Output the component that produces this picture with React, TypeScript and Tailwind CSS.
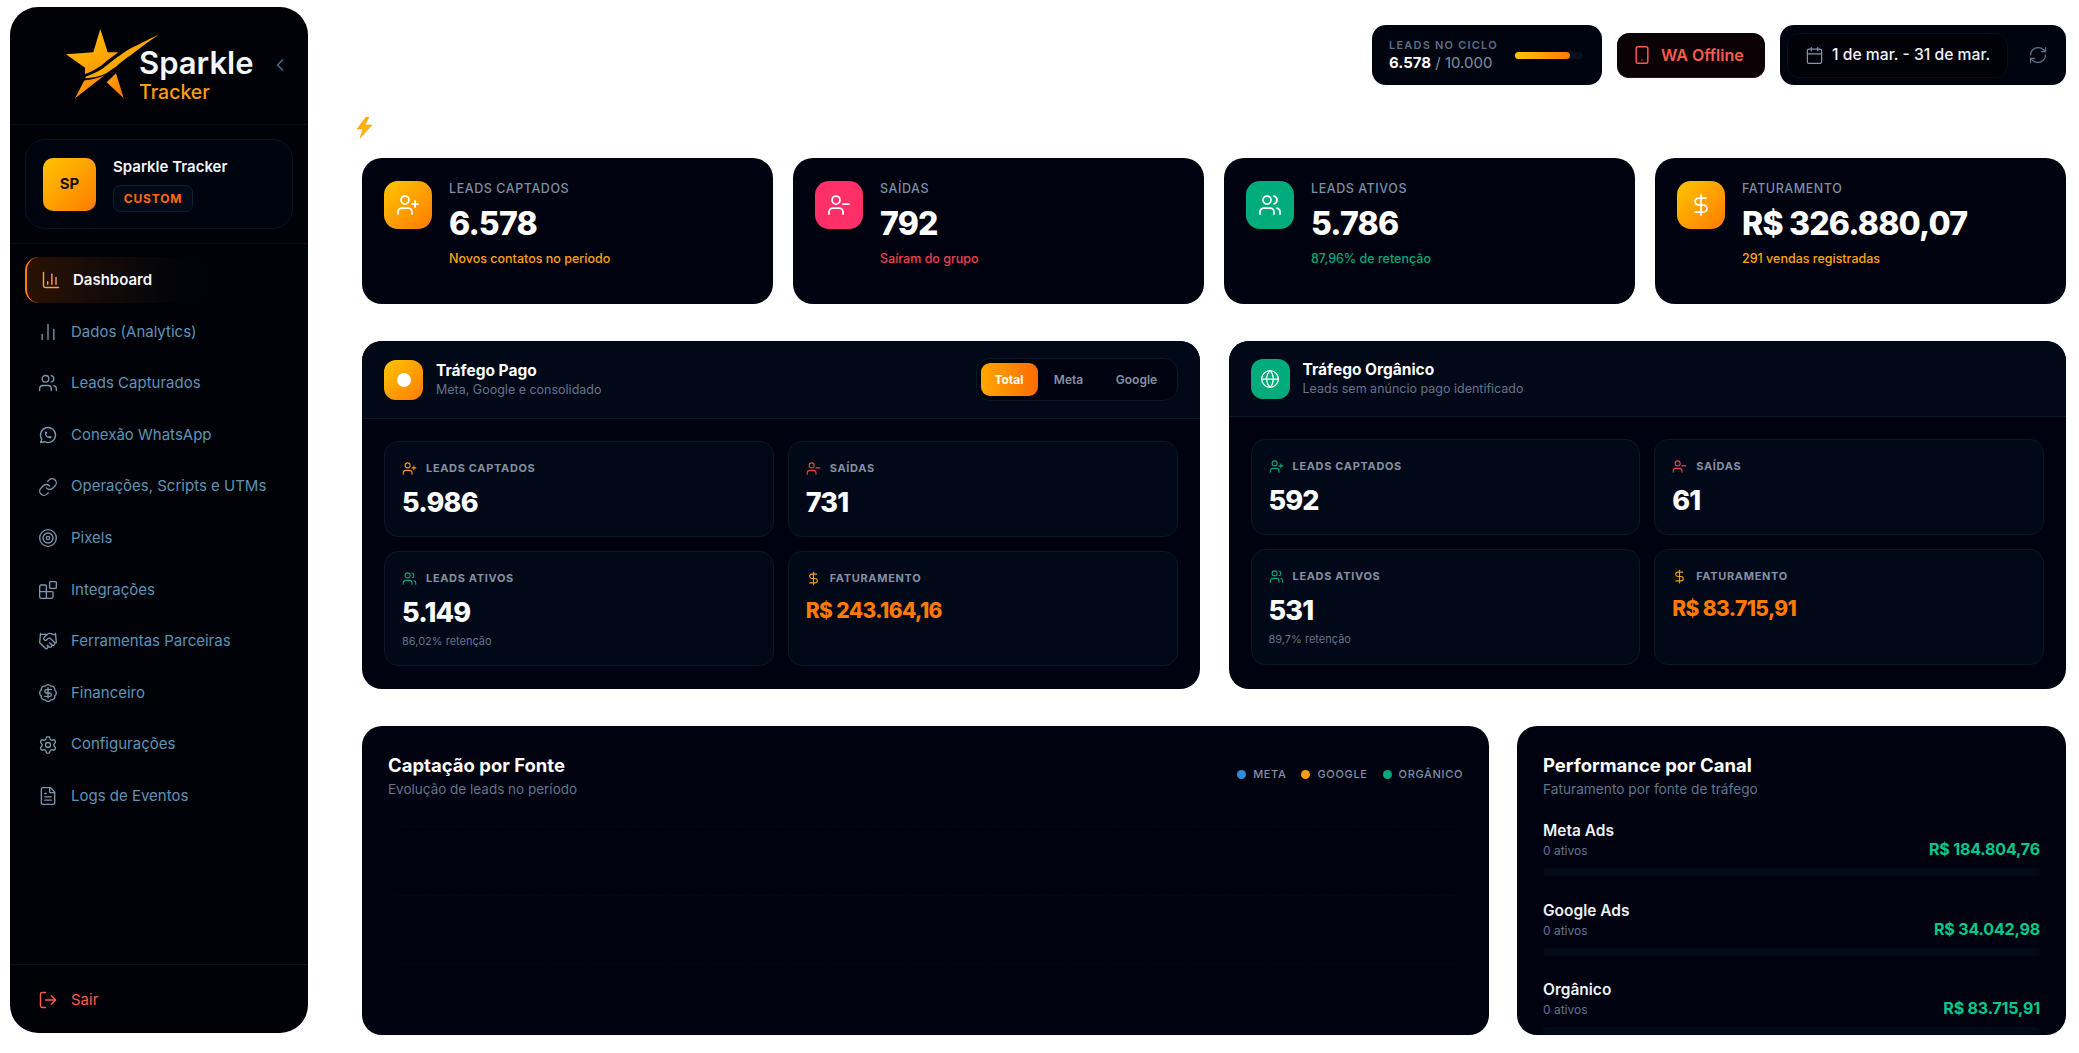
import React from 'react';
import {
  ChartColumn, ChartNoAxesColumn, Users, Link, Target, Blocks, Handshake, BadgeDollarSign, Settings, FileText,
  LogOut, Smartphone, Calendar, RefreshCw, UserPlus, UserMinus, DollarSign, Globe, ChevronLeft,
} from 'lucide-react';
import { TbBrandWhatsapp } from 'react-icons/tb';

const navItems = [
  { label: 'Dados (Analytics)', icon: ChartNoAxesColumn },
  { label: 'Leads Capturados', icon: Users },
  { label: 'Conexão WhatsApp', icon: TbBrandWhatsapp },
  { label: 'Operações, Scripts e UTMs', icon: Link },
  { label: 'Pixels', icon: Target },
  { label: 'Integrações', icon: Blocks },
  { label: 'Ferramentas Parceiras', icon: Handshake },
  { label: 'Financeiro', icon: BadgeDollarSign },
  { label: 'Configurações', icon: Settings },
  { label: 'Logs de Eventos', icon: FileText },
];

const kpis = [
  { label: 'LEADS CAPTADOS', value: '6.578', note: 'Novos contatos no período', noteClass: 'text-[#ffa310]', iconClass: 'bg-gradient-to-br from-[#ffc400] to-[#ff7a00]', icon: UserPlus },
  { label: 'SAÍDAS', value: '792', note: 'Saíram do grupo', noteClass: 'text-[#f43f4e]', iconClass: 'bg-[#ff2f68]', icon: UserMinus },
  { label: 'LEADS ATIVOS', value: '5.786', note: '87,96% de retenção', noteClass: 'text-[#00a878]', iconClass: 'bg-[#00ac7c]', icon: Users },
  { label: 'FATURAMENTO', value: 'R$ 326.880,07', note: '291 vendas registradas', noteClass: 'text-[#ffa310]', iconClass: 'bg-gradient-to-br from-[#ffc400] to-[#ff7a00]', icon: DollarSign },
];

const channels = [
  { name: 'Meta Ads', value: 'R$ 184.804,76' },
  { name: 'Google Ads', value: 'R$ 34.042,98' },
  { name: 'Orgânico', value: 'R$ 83.715,91' },
];

const Logo = () => (
  <svg width="100" height="76" viewBox="64 28 100 76" className="shrink-0">
    <defs>
      <linearGradient id="star" x1="0" y1="0" x2="0.6" y2="1">
        <stop offset="0" stopColor="#ffc800" />
        <stop offset="1" stopColor="#ff9a00" />
      </linearGradient>
      <linearGradient id="leg" x1="0" y1="0" x2="1" y2="1">
        <stop offset="0" stopColor="#ffab00" />
        <stop offset="1" stopColor="#ff7000" />
      </linearGradient>
    </defs>
    <path d="M99.3 29 L106.7 52.3 L117.3 52.3 L107 60 Q96 70 84 74 L84 67.7 L65 54.3 L92.3 52.3 Z" fill="url(#star)" />
    <path d="M158.3 34.3 C146 40 135 46 126.7 50 C120 54 110 62 101.7 68.5 C96 72 90 75 85 76.5 L84 78.3 C92 78 98 76.5 103.3 74.3 C108 72 111 69 115 66.7 C120 62 125 58 130 55 C140 47 150 40 158.3 34.3 Z" fill="#ffa800" />
    <path d="M74 98.3 L83.3 80.5 C90 80 97 78 103.3 75.5 Z" fill="url(#leg)" />
    <path d="M115 73.3 L122.7 98.3 L105.7 82.3 Z" fill="url(#leg)" />
  </svg>
);

const Sidebar = () => (
  <aside className="ml-[10px] mt-[7px] flex h-[1026px] w-[298px] shrink-0 flex-col overflow-hidden rounded-[28px] bg-[#000208]">
    <div className="flex h-[118px] items-start border-b border-[#07101a] pl-[55px] pr-[18px] pt-[21px]">
      <Logo />
      <div className="ml-[-26px] mt-[18px] flex flex-col">
        <span className="text-[31px] font-semibold leading-[34px] text-[#f4f7fa]">Sparkle</span>
        <span className="text-[19.5px] font-medium leading-[25px] text-[#ff9d0a]">Tracker</span>
      </div>
      <ChevronLeft size={20} className="ml-auto mt-[27px] text-[#4b6a85]" />
    </div>

    <div className="border-b border-[#07101a] px-[15px] py-[14px]">
      <div className="flex h-[90px] items-center gap-[17px] rounded-[20px] border border-[#0a1622] bg-[#00040f] pl-[17px]">
        <div className="flex h-[53px] w-[53px] items-center justify-center rounded-[10px] bg-gradient-to-br from-[#ffc400] to-[#ff7a00] text-[15px] font-bold text-[#14100a]">SP</div>
        <div className="flex flex-col gap-[9px] pt-[2px]">
          <span className="text-[15px] font-semibold leading-[18px] text-[#f4f7fa]">Sparkle Tracker</span>
          <span className="flex h-[27px] w-[80px] items-center justify-center rounded-[7px] border border-[#0e1f2e] bg-[#010a17] text-[12px] font-bold tracking-[0.07em] text-[#ff6a0a]">CUSTOM</span>
        </div>
      </div>
    </div>

    <nav className="flex flex-1 flex-col px-[15px] pt-[13px]">
      <div className="flex h-[46px] items-center gap-[12px] rounded-[14px] border-l-2 border-[#ff7a00] bg-gradient-to-r from-[#2a1204] to-[#000208] to-70% pl-[14px] text-[15px] font-semibold text-[#f4f7fa]">
        <ChartColumn size={20} strokeWidth={1.75} className="text-[#f9a03f]" />
        Dashboard
      </div>
      <div className="mt-[3px] flex flex-col">
        {navItems.map(item => (
          <div key={item.label} className="flex h-[51.6px] items-center gap-[13px] pl-[13px] text-[15px] text-[#5f93b5]">
            <item.icon size={20} strokeWidth={1.6} className="shrink-0 text-[#7f97ab]" />
            {item.label}
          </div>
        ))}
      </div>
    </nav>

    <div className="flex h-[69px] items-center gap-[13px] border-t border-[#08141f] pl-[28px] pt-[2px] text-[15px] text-[#ff5a4f]">
      <LogOut size={20} strokeWidth={1.75} />
      Sair
    </div>
  </aside>
);

const TopBar = () => (
  <div className="flex items-center justify-end">
    <div className="flex h-[60px] w-[230px] items-center gap-[14px] rounded-[14px] bg-[#00040f] pl-[17px]">
      <div className="flex w-[112px] flex-col">
        <span className="text-[11px] font-semibold leading-[16px] tracking-[0.11em] text-[#5b6f85]">LEADS NO CICLO</span>
        <span className="text-[15px] leading-[20px] text-[#7d8fa3]"><b className="font-bold text-white">6.578</b> / 10.000</span>
      </div>
      <div className="h-[7px] w-[68px] rounded-full bg-[#051020]">
        <div className="h-full w-[81%] rounded-full bg-gradient-to-r from-[#ffc400] to-[#ff7a00]" />
      </div>
    </div>
    <div className="ml-[15px] flex h-[45px] w-[148px] items-center gap-[9px] rounded-[12px] border-b border-[#3a1512] bg-[#0a0204] pl-[15px] pt-[1px] text-[16px] font-semibold text-[#ff5a4f]">
      <Smartphone size={20} strokeWidth={1.75} />
      WA Offline
    </div>
    <div className="ml-[15px] flex h-[60px] w-[286px] items-center gap-[20px] rounded-[14px] bg-[#00040f] pl-[7px]">
      <div className="flex h-[45px] w-[221px] items-center gap-[8px] rounded-[12px] border border-[#060f1c] bg-[#000208] pl-[17px] text-[15.7px] font-medium text-[#eef2f6]">
        <Calendar size={19} strokeWidth={1.5} className="text-[#8a97a6]" />
        1 de mar. - 31 de mar.
      </div>
      <RefreshCw size={20} strokeWidth={1.5} className="text-[#5f7488]" />
    </div>
  </div>
);

const KpiCard = ({ kpi }: { kpi: (typeof kpis)[number] }) => (
  <div className="flex h-[146px] items-start gap-[17px] rounded-[20px] bg-[#00030f] pl-[22px] pt-[24px]">
    <div className={`-mt-px flex h-[48px] w-[48px] items-center justify-center rounded-[14px] ${kpi.iconClass}`}>
      <kpi.icon size={24} strokeWidth={1.75} className="text-white" />
    </div>
    <div className="flex flex-col">
      <span className="text-[12.5px] font-medium leading-[14px] tracking-[0.045em] text-[#7d8fa3]">{kpi.label}</span>
      <span className="mt-[8px] text-[32px] font-extrabold leading-[40px] tracking-[-0.025em] text-white">{kpi.value}</span>
      <span className={`mt-[7px] text-[12.5px] font-medium leading-[16px] ${kpi.noteClass}`}>{kpi.note}</span>
    </div>
  </div>
);

type Metric = { label: string; value: string; money?: boolean; note?: string; icon: React.ElementType; iconClass: string };

const MetricCard = ({ metric }: { metric: Metric }) => (
  <div className="rounded-[14px] border border-[#0a1828] bg-[#010818] pl-[17px] pt-[16px]">
    <div className="flex h-[20px] items-center gap-[9px]">
      <metric.icon size={15} strokeWidth={1.75} className={metric.iconClass} />
      <span className="text-[11px] font-bold tracking-[0.06em] text-[#8291a3]">{metric.label}</span>
    </div>
    {metric.money ? (
      <div className="mt-[7px] text-[21px] font-extrabold leading-[32px] tracking-[-0.03em] text-[#ff7a00]">{metric.value}</div>
    ) : (
      <div className="mt-[7px] text-[27px] font-extrabold leading-[36px] tracking-[-0.03em] text-white">{metric.value}</div>
    )}
    {metric.note && <div className="mt-[2px] text-[11px] leading-[16px] text-[#64748b]">{metric.note}</div>}
  </div>
);

const PanelBody = ({ items, rowClass }: { items: Metric[]; rowClass: string }) => (
  <div className={`grid grid-cols-2 gap-[14px] px-[22px] pt-[22px] ${rowClass}`}>
    {items.map(m => <MetricCard key={m.label} metric={m} />)}
  </div>
);

const pago: Metric[] = [
  { label: 'LEADS CAPTADOS', value: '5.986', icon: UserPlus, iconClass: 'text-[#f59e0b]' },
  { label: 'SAÍDAS', value: '731', icon: UserMinus, iconClass: 'text-[#ef4444]' },
  { label: 'LEADS ATIVOS', value: '5.149', note: '86,02% retenção', icon: Users, iconClass: 'text-[#00a878]' },
  { label: 'FATURAMENTO', value: 'R$ 243.164,16', money: true, icon: DollarSign, iconClass: 'text-[#f59e0b]' },
];

const organico: Metric[] = [
  { label: 'LEADS CAPTADOS', value: '592', icon: UserPlus, iconClass: 'text-[#00a878]' },
  { label: 'SAÍDAS', value: '61', icon: UserMinus, iconClass: 'text-[#ef4444]' },
  { label: 'LEADS ATIVOS', value: '531', note: '89,7% retenção', icon: Users, iconClass: 'text-[#00a878]' },
  { label: 'FATURAMENTO', value: 'R$ 83.715,91', money: true, icon: DollarSign, iconClass: 'text-[#f59e0b]' },
];

const TrafficPanels = () => (
  <div className="mt-[37px] grid h-[348px] grid-cols-2 gap-[29px]">
    <section className="overflow-hidden rounded-[20px] bg-[#00030f]">
      <div className="flex h-[78px] items-center gap-[13px] border-b border-[#0a1a2a] bg-[#010818] px-[22px]">
        <div className="flex h-[40px] w-[39px] items-center justify-center rounded-[12px] bg-gradient-to-br from-[#ffc400] to-[#ff7a00]">
          <div className="h-[14px] w-[14px] rounded-full bg-white" />
        </div>
        <div className="flex flex-col">
          <span className="text-[15.5px] font-bold leading-[20px] text-white">Tráfego Pago</span>
          <span className="text-[12.5px] leading-[18px] text-[#64748b]">Meta, Google e consolidado</span>
        </div>
        <div className="ml-auto flex h-[43px] w-[202px] items-center rounded-[14px] border border-[#0a1828] bg-[#00030f] pl-[4px] text-[12px] font-semibold text-[#8291a3]">
          <span className="flex h-[33px] w-[57px] items-center justify-center rounded-[9px] bg-gradient-to-r from-[#ffa600] to-[#ff6a00] font-bold text-white">Total</span>
          <span className="w-[62px] text-center">Meta</span>
          <span className="w-[74px] text-center">Google</span>
        </div>
      </div>
      <PanelBody items={pago} rowClass="grid-rows-[96px_115px]" />
    </section>
    <section className="overflow-hidden rounded-[20px] bg-[#00030f]">
      <div className="flex h-[76px] items-center gap-[13px] border-b border-[#0a1a2a] bg-[#010818] px-[22px]">
        <div className="flex h-[40px] w-[39px] items-center justify-center rounded-[12px] bg-[#00ac7c]">
          <Globe size={20} strokeWidth={1.5} className="text-white" />
        </div>
        <div className="flex flex-col">
          <span className="text-[15.5px] font-bold leading-[20px] text-white">Tráfego Orgânico</span>
          <span className="text-[12.5px] leading-[18px] text-[#64748b]">Leads sem anúncio pago identificado</span>
        </div>
      </div>
      <PanelBody items={organico} rowClass="grid-rows-[96px_116px]" />
    </section>
  </div>
);

const legend = [
  { label: 'META', dot: 'bg-[#2d8fd5]' },
  { label: 'GOOGLE', dot: 'bg-[#ff9d0a]' },
  { label: 'ORGÂNICO', dot: 'bg-[#00ac7c]' },
];

const BottomRow = () => (
  <div className="mt-[37px] grid h-[309px] grid-cols-[1127px_549px] gap-[28px]">
    <section className="flex flex-col rounded-[20px] bg-[#00030f] px-[26px] pt-[27px]">
      <div className="flex items-start justify-between">
        <div className="flex flex-col">
          <span className="text-[18.5px] font-bold leading-[24px] text-white">Captação por Fonte</span>
          <span className="text-[13.5px] leading-[24px] text-[#64748b]">Evolução de leads no período</span>
        </div>
        <div className="mt-[13px] flex gap-[15px]">
          {legend.map(l => (
            <div key={l.label} className="flex items-center gap-[7px] text-[11px] font-medium tracking-[0.06em] text-[#8291a3]">
              <span className={`h-[9px] w-[9px] rounded-full ${l.dot}`} />
              {l.label}
            </div>
          ))}
        </div>
      </div>
      <div className="ml-[8px] mr-[8px] mt-[25px] flex flex-col gap-[67.5px]">
        <div className="border-t border-dashed border-[#050913]" />
        <div className="border-t border-dashed border-[#050913]" />
        <div className="border-t border-dashed border-[#050913]" />
      </div>
    </section>
    <section className="overflow-hidden rounded-[20px] bg-[#00030f] px-[26px] pt-[27px]">
      <div className="text-[18.5px] font-bold leading-[24px] text-white">Performance por Canal</div>
      <div className="text-[13.7px] leading-[24px] text-[#64748b]">Faturamento por fonte de tráfego</div>
      <div className="mt-[20px] flex flex-col gap-[16px]">
        {channels.map(c => (
          <div key={c.name} className="h-[63.5px]">
            <div className="flex items-end justify-between">
              <div className="flex flex-col">
                <span className="text-[15.5px] font-semibold leading-[20px] text-[#eef2f6]">{c.name}</span>
                <span className="text-[12px] leading-[20px] text-[#64748b]">0 ativos</span>
              </div>
              <span className="mb-[1px] text-[16px] font-bold leading-[22px] tracking-[-0.01em] text-[#00c98d]">{c.value}</span>
            </div>
            <div className="mt-[7px] h-[8px] rounded-full bg-[#020a18]" />
          </div>
        ))}
      </div>
    </section>
  </div>
);

export default function App() {
  return (
    <div className="flex h-[1053px] overflow-hidden bg-white font-[Inter,sans-serif]">
      <Sidebar />
      <main className="ml-[54px] mr-[13px] min-w-0 flex-1 pt-[25px]">
        <TopBar />
        <div className="mt-[32px] h-[41px]">
          <svg width="19" height="21" viewBox="0 0 19 21" className="ml-[-7px]">
            <path d="M11 0 L2 12 L8 12 L5 21 L17 8 L10 8 L14 0 Z" fill="#ffb300" stroke="#f08c00" strokeWidth="0.5" />
          </svg>
        </div>
        <div className="grid grid-cols-4 gap-[20px]">
          {kpis.map(k => <KpiCard key={k.label} kpi={k} />)}
        </div>
        <TrafficPanels />
        <BottomRow />
      </main>
    </div>
  );
}
